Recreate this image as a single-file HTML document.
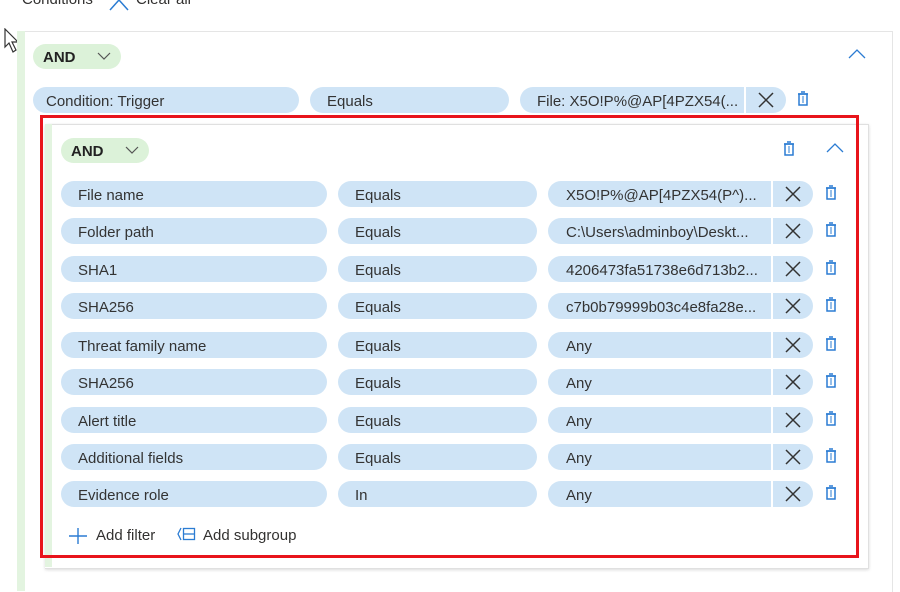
<!DOCTYPE html>
<html><head><style>
body{margin:0;width:900px;height:575px;background:#fff;position:relative;overflow:hidden;font-family:"Segoe UI","Liberation Sans",sans-serif;font-size:15px;color:#323130}
.a{position:absolute}
.p{position:absolute;height:26px;background:#cfe4f6;border-radius:13px;line-height:29px;box-sizing:border-box;padding-left:17px;white-space:nowrap;overflow:hidden;color:#333}
.v{border-radius:13px 0 0 13px}
.x{position:absolute;width:40px;height:26px;background:#cfe4f6;border-radius:0 13px 13px 0}
.and{position:absolute;height:25px;width:88px;background:#dcf2d9;border-radius:13px;font-weight:bold;line-height:27px;padding-left:10px;box-sizing:border-box;color:#222}
</style></head><body>
<div class="a" style="left:22px;top:-9px">Conditions</div>
<svg class="a" style="left:108px;top:-2px" width="22" height="14"><path d="M2 12 L11 2 L20 12" stroke="#2b7cd3" stroke-width="1.5" fill="none"/></svg>
<div class="a" style="left:136px;top:-9px">Clear all</div>
<svg class="a" style="left:4px;top:28px" width="18" height="26"><path d="M1 1 L1 19 L5 15 L9 24 L12 22 L8 14 L14 14 Z" fill="#fff" stroke="#333" stroke-width="1.2"/></svg>
<div class="a" style="left:17px;top:31px;width:875px;height:560px;border-top:1px solid #e5e5e5;border-right:1px solid #e5e5e5"></div>
<div class="a" style="left:17px;top:31px;width:8px;height:560px;background:#e3f4e0"></div>
<div class="and" style="left:33px;top:44px">AND<svg class="a" style="left:64px;top:8px" width="14" height="9"><path d="M1 1 L7 7 L13 1" stroke="#555" stroke-width="1.2" fill="none"/></svg></div>
<svg class="a" style="left:848px;top:49px" width="18" height="11"><path d="M1 9 L9 1 L17 9" stroke="#2b7cd3" stroke-width="1.3" fill="none"/></svg>
<div class="p" style="left:33px;top:87px;width:266px;padding-left:13px">Condition: Trigger</div>
<div class="p" style="left:310px;top:87px;width:199px">Equals</div>
<div class="p v" style="left:520px;top:87px;width:224px">File: X5O!P%@AP[4PZX54(...</div>
<div class="x" style="left:746px;top:87px"><svg width="40" height="26"><path d="M13 6 L27 20 M27 6 L13 20" stroke="#333" stroke-width="1.5"/></svg></div>
<svg class="a" style="left:797px;top:91px" width="12" height="16"><rect x="2" y="3" width="8" height="11" fill="none" stroke="#2b7cd3" stroke-width="1.5"/><path d="M1 3 H11 M4 1 H8" stroke="#2b7cd3" stroke-width="1.5"/><path d="M6 5 V12" stroke="#2b7cd3"/></svg>
<div class="a" style="left:45px;top:124px;width:823px;height:443px;border-top:1px solid #e0e0e0;border-right:1px solid #e0e0e0;border-bottom:1px solid #e0e0e0;box-shadow:0 1px 3px rgba(0,0,0,.15)"></div>
<div class="a" style="left:45px;top:124px;width:7px;height:443px;background:#e3f4e0"></div>
<div class="a" style="left:40px;top:115px;width:813px;height:437px;border:3px solid #e8141b"></div>
<div class="and" style="left:61px;top:138px">AND<svg class="a" style="left:64px;top:8px" width="14" height="9"><path d="M1 1 L7 7 L13 1" stroke="#555" stroke-width="1.2" fill="none"/></svg></div>
<svg class="a" style="left:783px;top:141px" width="12" height="16"><rect x="2" y="3" width="8" height="11" fill="none" stroke="#2b7cd3" stroke-width="1.5"/><path d="M1 3 H11 M4 1 H8" stroke="#2b7cd3" stroke-width="1.5"/><path d="M6 5 V12" stroke="#2b7cd3"/></svg>
<svg class="a" style="left:826px;top:143px" width="18" height="11"><path d="M1 9 L9 1 L17 9" stroke="#2b7cd3" stroke-width="1.3" fill="none"/></svg>
<div id="rows"></div>
<svg class="a" style="left:68px;top:527px" width="20" height="18"><path d="M10 1 V17 M1 9 H19" stroke="#2b7cd3" stroke-width="1.4"/></svg>
<div class="a" style="left:96px;top:527px">Add filter</div>
<svg class="a" style="left:177px;top:527px" width="19" height="14"><path d="M4 1 L1 7 L4 13" stroke="#2b7cd3" stroke-width="1.3" fill="none"/><rect x="6.5" y="1.5" width="11" height="11" fill="none" stroke="#2b7cd3" stroke-width="1.3"/><path d="M6.5 7 H17.5" stroke="#2b7cd3" stroke-width="1.3"/></svg>
<div class="a" style="left:203px;top:527px">Add subgroup</div>
<script>
var r=[["File name","Equals","X5O!P%@AP[4PZX54(P^)...",194],["Folder path","Equals","C:\\Users\\adminboy\\Deskt...",231],["SHA1","Equals","4206473fa51738e6d713b2...",269],["SHA256","Equals","c7b0b79999b03c4e8fa28e...",306],["Threat family name","Equals","Any",345],["SHA256","Equals","Any",382],["Alert title","Equals","Any",420],["Additional fields","Equals","Any",457],["Evidence role","In","Any",494]];
var h="";r.forEach(function(e){var t=e[3]-13;
h+='<div class="p" style="left:61px;top:'+t+'px;width:266px">'+e[0]+'</div>';
h+='<div class="p" style="left:338px;top:'+t+'px;width:199px">'+e[1]+'</div>';
h+='<div class="p v" style="left:548px;top:'+t+'px;width:223px;padding-left:18px">'+e[2]+'</div>';
h+='<div class="x" style="left:773px;top:'+t+'px"><svg width="40" height="26"><path d="M13 6 L27 20 M27 6 L13 20" stroke="#333" stroke-width="1.5"/></svg></div>';
h+='<svg class="a" style="left:825px;top:'+(t+4)+'px" width="12" height="16"><rect x="2" y="3" width="8" height="11" fill="none" stroke="#2b7cd3" stroke-width="1.5"/><path d="M1 3 H11 M4 1 H8" stroke="#2b7cd3" stroke-width="1.5"/><path d="M6 5 V12" stroke="#2b7cd3"/></svg>';});
document.getElementById("rows").innerHTML=h;
</script>
</body></html>
